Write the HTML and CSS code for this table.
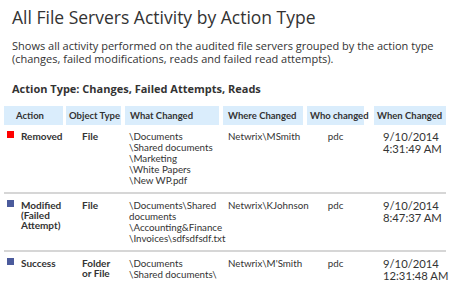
FILE: index.html
```html
<!DOCTYPE html>
<html lang="en">
<head>
    <meta charset="UTF-8">
    <title>All File Servers Activity by Action Type</title>
    <link rel="stylesheet" href="styles.css">
</head>
<body>

    <div class="report-head">
        <h1>All File Servers Activity by Action Type</h1>
        <p class="summary">Shows all activity performed on the audited file servers grouped by the action type (changes, failed modifications, reads and failed read attempts).</p>
        <p class="filter">Action Type: Changes, Failed Attempts, Reads</p>
    </div>

    <table class="activity">
        <colgroup>
            <col class="c-action">
            <col class="c-object">
            <col class="c-what">
            <col class="c-where">
            <col class="c-who">
            <col class="c-when">
        </colgroup>
        <thead>
            <tr>
                <th class="action">Action</th>
                <th class="object">Object Type</th>
                <th class="what">What Changed</th>
                <th class="where">Where Changed</th>
                <th class="who">Who changed</th>
                <th class="when">When Changed</th>
            </tr>
        </thead>
        <tbody>
            <tr>
                <td class="action"><span class="mark removed"></span>Removed</td>
                <td class="object">File</td>
                <td class="what">\Documents<br>\Shared documents<br>\Marketing<br>\White Papers<br>\New WP.pdf</td>
                <td class="where">Netwrix\MSmith</td>
                <td class="who">pdc</td>
                <td class="when">9/10/2014<br>4:31:49 AM</td>
            </tr>
            <tr>
                <td class="action"><span class="mark other"></span>Modified<br>(Failed<br>Attempt)</td>
                <td class="object">File</td>
                <td class="what">\Documents\Shared<br>documents<br>\Accounting&amp;Finance<br>\Invoices\sdfsdfsdf.txt</td>
                <td class="where">Netwrix\KJohnson</td>
                <td class="who">pdc</td>
                <td class="when">9/10/2014<br>8:47:37 AM</td>
            </tr>
            <tr>
                <td class="action"><span class="mark other"></span>Success</td>
                <td class="object">Folder<br>or File</td>
                <td class="what">\Documents<br>\Shared documents\</td>
                <td class="where">Netwrix\M'Smith</td>
                <td class="who">pdc</td>
                <td class="when">9/10/2014<br>12:31:48 AM</td>
            </tr>
        </tbody>
    </table>

</body>
</html>
```

FILE: styles.css
```css
body {
    font-family: 'Open Sans', sans-serif;
    margin: 0;
    padding: 0 4px;
    background: #fff;
    color: #333;
}

/* Report header */
.report-head {
    padding: 5px 8px 0;
}

h1 {
    font-size: 17.5px;
    font-weight: normal;
    color: #333;
    margin: 0 0 10px;
    line-height: 24px;
}

.summary {
    font-size: 11px;
    line-height: 13px;
    margin: 0 0 17px;
}

.filter {
    font-size: 11px;
    font-weight: bold;
    line-height: 14px;
    margin: 0 0 10px;
}

/* Activity table */
.activity {
    width: 442px;
    table-layout: fixed;
    border-collapse: separate;
    border-spacing: 0;
    font-family: 'Lato', sans-serif;
    font-size: 9.75px;
}

.c-action { width: 59px; }
.c-object { width: 58px; }
.c-what { width: 98px; }
.c-where { width: 84px; }
.c-who { width: 61px; }
.c-when { width: 82px; }

.activity th {
    background: #daedfc;
    background-clip: padding-box;
    border-left: 4px solid #fff;
    height: 19px;
    padding: 0 3px;
    font-size: 9.5px;
    font-weight: bold;
    text-align: left;
    white-space: nowrap;
}

.activity th.action {
    border-left: 0;
    padding-left: 12px;
}

.activity th.object { border-left-width: 3px; }
.activity th.what, .activity th.where { padding-left: 5px; }
.activity th.who { text-align: center; }
.activity th.when { border-left-width: 10px; }

.activity td {
    vertical-align: top;
    border-bottom: 2px solid #d6d6d6;
    padding: 6px 0 6px;
    line-height: 11px;
    white-space: nowrap;
}

.activity td.action {
    font-size: 10px;
    font-weight: bold;
    line-height: 10px;
    padding-left: 17px;
    position: relative;
}

.mark {
    position: absolute;
    left: 3px;
    top: 6px;
    width: 7px;
    height: 7px;
}

.mark.removed { background: #f00; }
.mark.other { background: #4b5b9c; }

.activity td.object {
    font-size: 10px;
    font-weight: bold;
    line-height: 10px;
    padding-left: 19px;
}

.activity td.what { padding-left: 8px; }
.activity td.where { padding-left: 9px; }
.activity td.who { text-align: center; padding-left: 4px; }

.activity td.when {
    font-size: 11.25px;
    line-height: 12px;
    padding-left: 19px;
}

.activity tbody tr:last-child td {
    border-bottom: 0;
}
```
